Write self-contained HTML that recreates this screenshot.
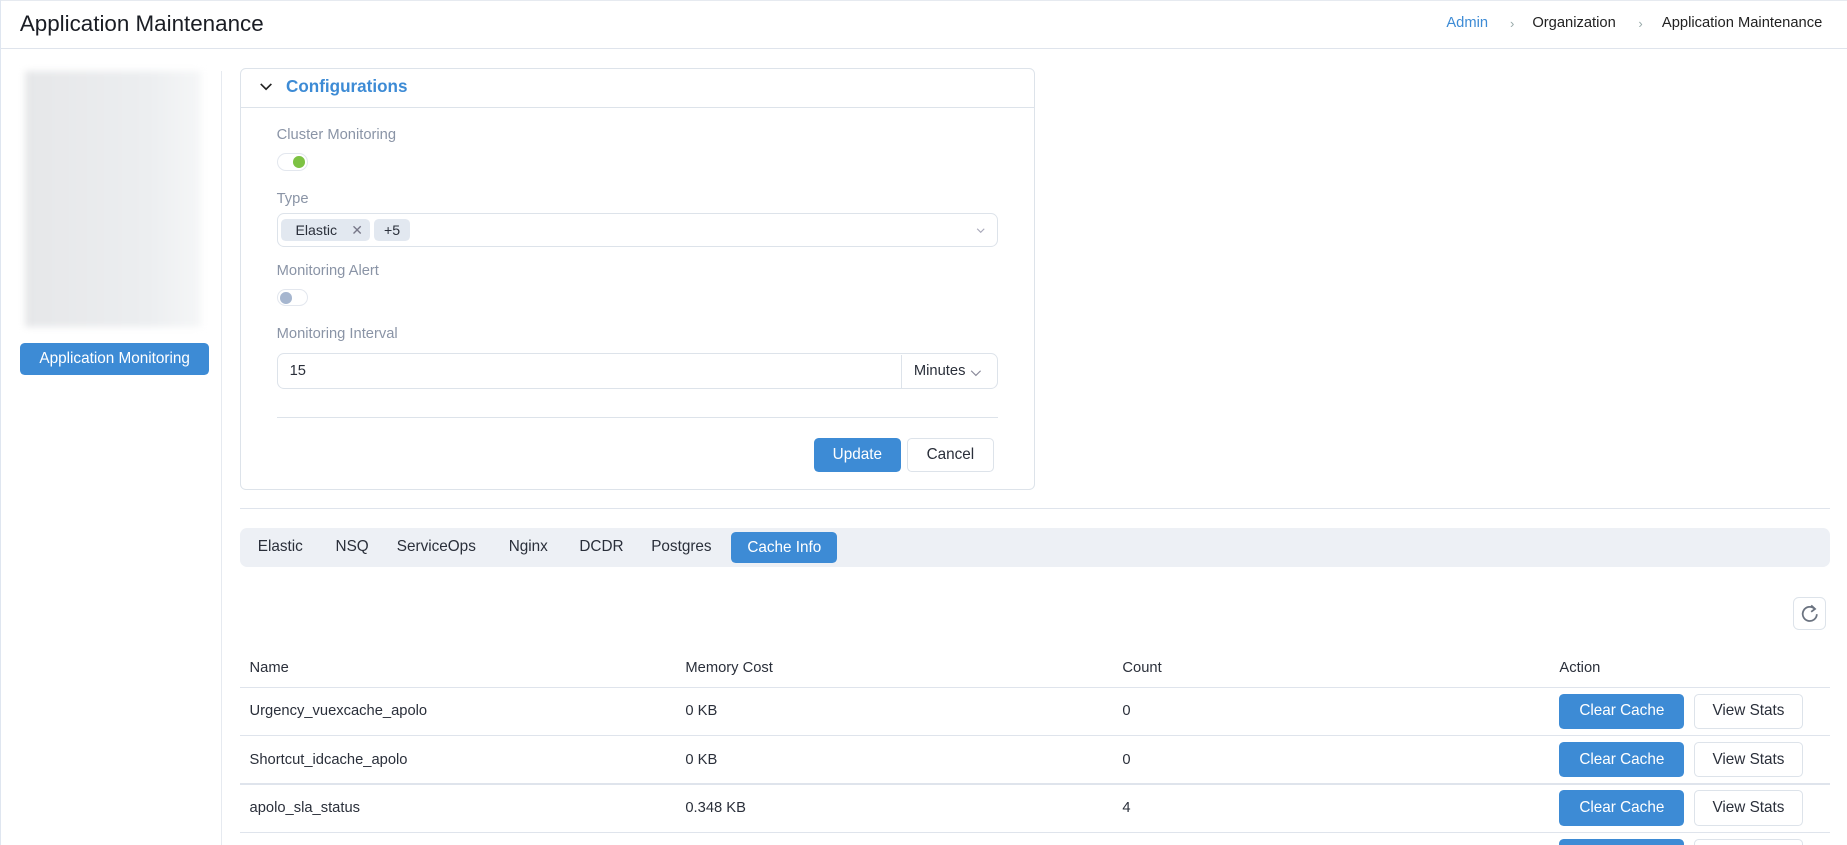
<!DOCTYPE html>
<html><head><meta charset="utf-8"><style>
*{box-sizing:border-box;margin:0;padding:0}
html,body{width:1847px;height:845px;overflow:hidden;background:#fff}
#w{zoom:1.17794;width:1568px;height:717px;overflow:hidden;position:relative;font-family:"Liberation Sans",sans-serif;color:#2a2f3a;border-left:1px solid #dfe6f0}
.a{position:absolute}
.hdr{left:0;top:0;width:1568px;height:42px;border-bottom:1px solid #dfe4ec;border-top:1px solid #e6eaf0}
.title{left:16px;top:9px;font-size:19px;color:#1a1d24}
.bc{top:13px;font-size:12.5px;color:#222}
.sep{top:14px;font-size:11px;color:#9aa}
.side{left:187px;top:60px;width:1px;height:660px;background:#e6eaf0}
.blur{left:20px;top:60px;width:150px;height:218px;background:linear-gradient(90deg,#e6e7e9,#eceef0 70%,#f5f6f7);filter:blur(3px)}
.btn{border-radius:4px;font-size:13px;display:flex;align-items:center;justify-content:center}
.pri{background:#3d8bd5;color:#fff}
.sec{background:#fff;border:1px solid #dde3ea;color:#2a2f3a}
.card{left:203px;top:58px;width:675px;height:358px;border:1px solid #dde3ea;border-radius:5px}
.lbl{left:234px;font-size:12.5px;color:#8a94a6}
.tog{left:234px;width:27px;height:15px;border:1px solid #e3e7ee;border-radius:8px;background:#fff}
.tog i{position:absolute;top:2px;width:10px;height:10px;border-radius:50%}
.box{border:1px solid #dde3ea;border-radius:6px;background:#fff}
.chip{background:#e2e8f0;border-radius:4px;font-size:12px;top:186px;height:19px;display:flex;align-items:center}
.tabs{left:203px;top:448px;width:1350px;height:33px;background:#edf0f5;border-radius:6px}
.tab{top:457px;font-size:13px;color:#2a2f3a}
.th{top:560px;font-size:12.5px;color:#2a2f3a}
.td{font-size:12.5px;color:#2a2f3a}
.hl{left:203px;width:1350px;height:1px;background:#dfe4ec}
</style></head><body><div id="w">
<div class="a hdr"></div>
<div class="a title">Application Maintenance</div>
<div class="a bc" style="left:1227px;color:#3d8bd5">Admin</div>
<div class="a sep" style="left:1281px">›</div>
<div class="a bc" style="left:1300px">Organization</div>
<div class="a sep" style="left:1390px">›</div>
<div class="a bc" style="left:1410px">Application Maintenance</div>

<div class="a side"></div>
<div class="a blur"></div>
<div class="a btn pri" style="left:16px;top:291px;width:161px;height:27px">Application Monitoring</div>

<div class="a card"></div>
<div class="a" style="left:204px;top:91px;width:673px;height:1px;background:#dde3ea"></div>
<svg class="a" style="left:219px;top:69px" width="12" height="10" viewBox="0 0 12 10"><path d="M1.5 2.5 L6 7 L10.5 2.5" fill="none" stroke="#222" stroke-width="1.4"/></svg>
<div class="a" style="left:242px;top:65px;font-size:14.5px;color:#3d8bd5;font-weight:bold">Configurations</div>

<div class="a lbl" style="top:108px">Cluster Monitoring</div>
<div class="a tog" style="top:130px"><i style="left:13px;background:#7dc243"></i></div>
<div class="a lbl" style="top:162px">Type</div>
<div class="a box" style="left:234px;top:181px;width:612px;height:29px"></div>
<div class="a chip" style="left:238px;width:75px;padding-left:12px">Elastic<span style="margin-left:12px;color:#778">✕</span></div>
<div class="a chip" style="left:317px;width:30px;justify-content:center">+5</div>
<svg class="a" style="left:828px;top:193px" width="8" height="6"><path d="M1 1.5 L4 4.5 L7 1.5" fill="none" stroke="#aab" stroke-width="1"/></svg>
<div class="a lbl" style="top:223px">Monitoring Alert</div>
<div class="a tog" style="top:245px"><i style="left:2px;background:#a6b6cf"></i></div>
<div class="a lbl" style="top:277px">Monitoring Interval</div>
<div class="a box" style="left:234px;top:300px;width:612px;height:30px"></div>
<div class="a" style="left:764px;top:301px;width:1px;height:28px;background:#dde3ea"></div>
<div class="a td" style="left:245px;top:308px">15</div>
<div class="a td" style="left:775px;top:308px">Minutes</div>
<svg class="a" style="left:823px;top:313px" width="10" height="7"><path d="M1 1.5 L5 5.5 L9 1.5" fill="none" stroke="#889" stroke-width="1"/></svg>
<div class="a" style="left:234px;top:354px;width:612px;height:1px;background:#dde3ea"></div>
<div class="a btn pri" style="left:690px;top:372px;width:74px;height:29px">Update</div>
<div class="a btn sec" style="left:769px;top:372px;width:74px;height:29px">Cancel</div>

<div class="a hl" style="top:431px"></div>
<div class="a tabs"></div>
<div class="a tab" style="left:218px">Elastic</div>
<div class="a tab" style="left:284px">NSQ</div>
<div class="a tab" style="left:336px">ServiceOps</div>
<div class="a tab" style="left:431px">Nginx</div>
<div class="a tab" style="left:491px">DCDR</div>
<div class="a tab" style="left:552px">Postgres</div>
<div class="a btn pri" style="left:620px;top:452px;width:90px;height:26px">Cache Info</div>

<div class="a box" style="left:1521px;top:507px;width:28px;height:28px;border-radius:5px"></div>
<svg class="a" style="left:1527px;top:512px" width="17" height="18" viewBox="0 0 17 18"><path d="M12.5 5 A6 6 0 1 0 14.3 9.5" fill="none" stroke="#6b7380" stroke-width="1.5"/><path d="M9.5 2 L12.8 5 L9.5 7.5" fill="none" stroke="#6b7380" stroke-width="1.5"/></svg>

<div class="a th" style="left:211px">Name</div>
<div class="a th" style="left:581px">Memory Cost</div>
<div class="a th" style="left:952px">Count</div>
<div class="a th" style="left:1323px">Action</div>
<div class="a hl" style="top:583px"></div>

<div class="a td" style="left:211px;top:597px">Urgency_vuexcache_apolo</div>
<div class="a td" style="left:581px;top:597px">0 KB</div>
<div class="a td" style="left:952px;top:597px">0</div>
<div class="a btn pri" style="left:1323px;top:589px;width:106px;height:30px">Clear Cache</div>
<div class="a btn sec" style="left:1437px;top:589px;width:93px;height:30px">View Stats</div>
<div class="a hl" style="top:624px"></div>

<div class="a td" style="left:211px;top:638px">Shortcut_idcache_apolo</div>
<div class="a td" style="left:581px;top:638px">0 KB</div>
<div class="a td" style="left:952px;top:638px">0</div>
<div class="a btn pri" style="left:1323px;top:630px;width:106px;height:30px">Clear Cache</div>
<div class="a btn sec" style="left:1437px;top:630px;width:93px;height:30px">View Stats</div>
<div class="a hl" style="top:665px"></div>

<div class="a td" style="left:211px;top:679px">apolo_sla_status</div>
<div class="a td" style="left:581px;top:679px">0.348 KB</div>
<div class="a td" style="left:952px;top:679px">4</div>
<div class="a btn pri" style="left:1323px;top:671px;width:106px;height:30px">Clear Cache</div>
<div class="a btn sec" style="left:1437px;top:671px;width:93px;height:30px">View Stats</div>
<div class="a hl" style="top:706px"></div>
<div class="a btn pri" style="left:1323px;top:712px;width:106px;height:30px"></div>
<div class="a btn sec" style="left:1437px;top:712px;width:93px;height:30px"></div>
</div></body></html>
